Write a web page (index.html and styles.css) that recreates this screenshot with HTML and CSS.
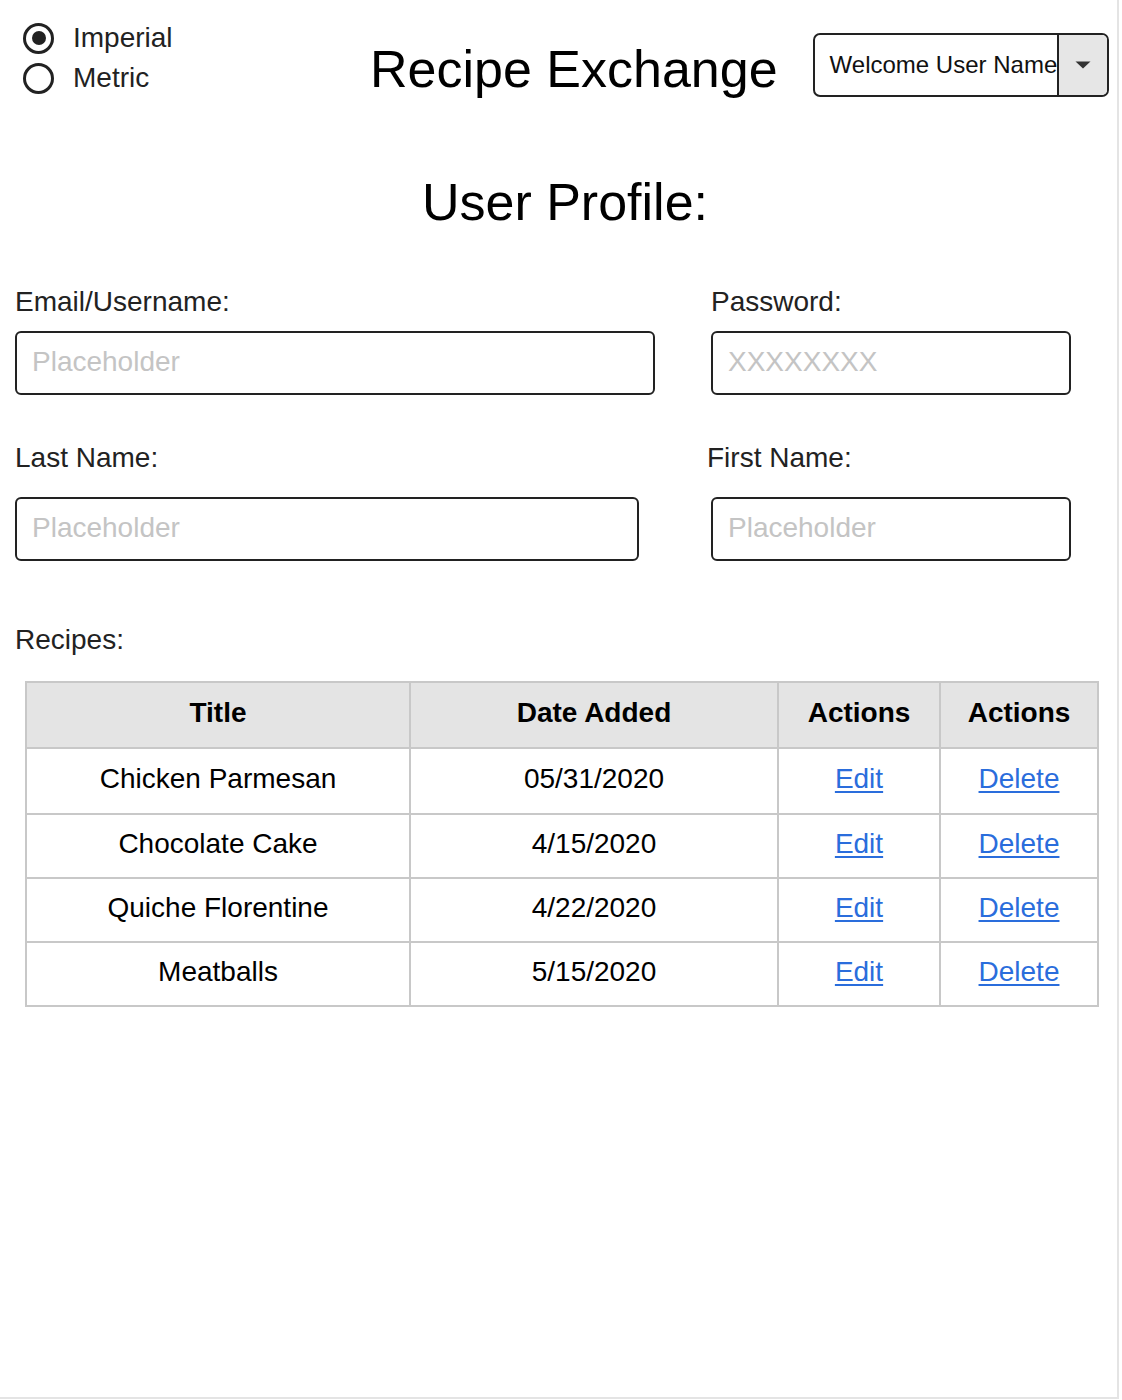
FILE: index.html
```html
<!DOCTYPE html>
<html lang="en">
<head>
<meta charset="utf-8">
<title>Recipe Exchange - User Profile</title>
<link rel="stylesheet" href="styles.css">
</head>
<body>
<div class="page">
  <header class="header">
    <div class="units">
      <label class="unit"><span class="radio checked"></span><span class="unit-text">Imperial</span></label>
      <label class="unit"><span class="radio"></span><span class="unit-text">Metric</span></label>
    </div>
    <h1 class="app-title">Recipe Exchange</h1>
    <div class="user-menu">
      <span class="user-name">Welcome User Name</span>
      <span class="user-caret"><svg width="16" height="8" viewBox="0 0 16 8"><path d="M0.5 0.5 H15.5 L8 7.5 Z" fill="#333"/></svg></span>
    </div>
  </header>

  <h2 class="page-title">User Profile:</h2>

  <section class="form">
    <div class="row row-first">
      <div class="field">
        <div class="label">Email/Username:</div>
        <div class="input input-email">Placeholder</div>
      </div>
      <div class="field">
        <div class="label">Password:</div>
        <div class="input input-right">XXXXXXXX</div>
      </div>
    </div>
    <div class="row row-second">
      <div class="field">
        <div class="label">Last Name:</div>
        <div class="input input-last">Placeholder</div>
      </div>
      <div class="field">
        <div class="label label-shift">First Name:</div>
        <div class="input input-right">Placeholder</div>
      </div>
    </div>
    <div class="label recipes-label">Recipes:</div>
  </section>

  <table class="recipes">
    <colgroup>
      <col class="c-title"><col class="c-date"><col class="c-act"><col class="c-act2">
    </colgroup>
    <thead>
      <tr><th>Title</th><th>Date Added</th><th>Actions</th><th>Actions</th></tr>
    </thead>
    <tbody>
      <tr class="tall"><td>Chicken Parmesan</td><td>05/31/2020</td><td><a href="#">Edit</a></td><td><a href="#">Delete</a></td></tr>
      <tr><td>Chocolate Cake</td><td>4/15/2020</td><td><a href="#">Edit</a></td><td><a href="#">Delete</a></td></tr>
      <tr><td>Quiche Florentine</td><td>4/22/2020</td><td><a href="#">Edit</a></td><td><a href="#">Delete</a></td></tr>
      <tr><td>Meatballs</td><td>5/15/2020</td><td><a href="#">Edit</a></td><td><a href="#">Delete</a></td></tr>
    </tbody>
  </table>
</div>
</body>
</html>
```

FILE: styles.css
```css
* { box-sizing: border-box; }

html, body {
  margin: 0;
  padding: 0;
  background: #fff;
}

body {
  font-family: "Liberation Sans", Arial, Helvetica, sans-serif;
  color: #000;
}

.page {
  width: 1119px;
  height: 1399px;
  border-right: 2px solid #e4e4e4;
  border-bottom: 2px solid #e4e4e4;
  overflow: hidden;
}

/* Header */
.header {
  display: flex;
  align-items: flex-start;
  padding: 18px 0 0 23px;
  height: 99px;
}

.units {
  width: 347px;
  display: flex;
  flex-direction: column;
}

.unit {
  display: flex;
  align-items: center;
  height: 40px;
  color: #222;
  font-size: 28px;
}

.unit-text {
  margin-top: -1px;
}

.radio {
  width: 31px;
  height: 31px;
  border: 3px solid #222;
  border-radius: 50%;
  display: flex;
  align-items: center;
  justify-content: center;
  margin-right: 19px;
  flex: none;
}

.radio.checked::after {
  content: "";
  width: 14px;
  height: 14px;
  border-radius: 50%;
  background: #222;
}

.app-title {
  margin: 21px 0 0 0;
  font-size: 52px;
  font-weight: normal;
  line-height: 60px;
  color: #000;
  white-space: nowrap;
}

.user-menu {
  margin: 15px 0 0 35px;
  width: 296px;
  height: 64px;
  border: 2px solid #222;
  border-radius: 7px;
  display: flex;
  overflow: hidden;
}

.user-name {
  flex: 1;
  font-size: 24px;
  color: #111;
  line-height: 60px;
  padding-left: 15px;
  white-space: nowrap;
  overflow: hidden;
  border-right: 2px solid #222;
}

.user-caret {
  width: 48px;
  background: #e6e6e6;
  display: flex;
  align-items: center;
  justify-content: center;
}

/* Page heading */
.page-title {
  margin: 73px 0 0 0;
  padding-left: 13px;
  text-align: center;
  font-size: 52px;
  font-weight: normal;
  line-height: 60px;
  color: #000;
}

/* Form */
.form {
  padding-left: 15px;
}

.row {
  display: grid;
  grid-template-columns: 696px 360px;
}

.row-first {
  margin-top: 54px;
}

.row-first .label {
  margin-bottom: 13px;
}

.row-second {
  margin-top: 47px;
}

.row-second .label {
  margin-bottom: 23px;
}

.label {
  font-size: 28px;
  line-height: 32px;
  color: #222;
}

.label-shift {
  margin-left: -4px;
}

.input {
  height: 64px;
  border: 2px solid #222;
  border-radius: 6px;
  padding-left: 15px;
  font-size: 28px;
  line-height: 58px;
  color: #c4c4c4;
  white-space: nowrap;
}

.input-email { width: 640px; }
.input-last { width: 624px; }
.input-right { width: 360px; }

.recipes-label {
  margin-top: 63px;
}

/* Table */
.recipes {
  margin: 25px 0 0 25px;
  border-collapse: collapse;
  table-layout: fixed;
  width: 1074px;
  font-size: 28px;
}

.c-title { width: 384px; }
.c-date { width: 368px; }
.c-act { width: 162px; }
.c-act2 { width: 158px; }

.recipes th,
.recipes td {
  border: 2px solid #c8c8c8;
  text-align: center;
  vertical-align: middle;
  padding: 0 0 4px 0;
  color: #000;
}

.recipes th {
  background: #e4e4e4;
  font-weight: bold;
  height: 66px;
}

.recipes td {
  height: 64px;
}

.recipes tr.tall td {
  height: 66px;
}

.recipes a {
  color: #2a6ddc;
  text-decoration: underline;
  text-underline-offset: 3px;
}
```
